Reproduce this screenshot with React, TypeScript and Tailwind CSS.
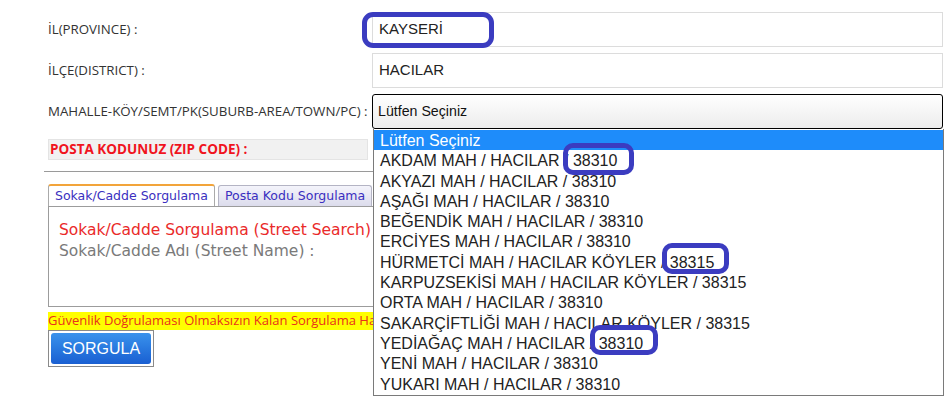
import React from "react";

const items = [
  "AKDAM MAH / HACILAR / 38310",
  "AKYAZI MAH / HACILAR / 38310",
  "AŞAĞI MAH / HACILAR / 38310",
  "BEĞENDİK MAH / HACILAR / 38310",
  "ERCİYES MAH / HACILAR / 38310",
  "HÜRMETCİ MAH / HACILAR KÖYLER / 38315",
  "KARPUZSEKİSİ MAH / HACILAR KÖYLER / 38315",
  "ORTA MAH / HACILAR / 38310",
  "SAKARÇİFTLİĞİ MAH / HACILAR KÖYLER / 38315",
  "YEDİAĞAÇ MAH / HACILAR / 38310",
  "YENİ MAH / HACILAR / 38310",
  "YUKARI MAH / HACILAR / 38310",
];

const labelFont = { fontFamily: '"Open Sans", "Noto Sans", sans-serif' };

export default function App() {
  return (
    <div className="relative w-[945px] h-[399px] bg-white overflow-hidden">
      <div className="flex flex-col pl-[48px] pt-[12px]">
        {/* Row 1 */}
        <div className="flex items-center h-[35px]">
          <div className="w-[324px] pt-[1px] text-[13.3px] text-[#333] whitespace-nowrap" style={labelFont}>İL(PROVINCE) :</div>
          <div className="w-[571px] h-[35px] border border-[#dcdcdc] flex items-center pl-[6px] text-[15px] text-[#222] font-['Liberation_Sans',Arial,sans-serif]">
            KAYSERİ
          </div>
        </div>
        {/* Row 2 */}
        <div className="flex items-center h-[35px] mt-[6px]">
          <div className="w-[324px] pt-[1px] text-[13.3px] text-[#333] whitespace-nowrap" style={labelFont}>İLÇE(DISTRICT) :</div>
          <div className="w-[571px] h-[35px] border border-[#dcdcdc] flex items-center pl-[6px] text-[15px] text-[#222] font-['Liberation_Sans',Arial,sans-serif]">
            HACILAR
          </div>
        </div>
        {/* Row 3 */}
        <div className="flex items-center h-[35px] mt-[6px]">
          <div className="w-[324px] pt-[1px] text-[13.3px] text-[#333] whitespace-nowrap" style={labelFont}>MAHALLE-KÖY/SEMT/PK(SUBURB-AREA/TOWN/PC) :</div>
          <div className="w-[571px] h-[35px] border-[1.5px] border-black rounded-[3px] bg-gradient-to-b from-white to-[#ececec] flex items-center pl-[5px] text-[14.2px] text-[#111] font-['Liberation_Sans',Arial,sans-serif]">
            Lütfen Seçiniz
          </div>
        </div>
        {/* Row 4 */}
        <div className="flex mt-[10px]">
          <div className="w-[320px] h-[21px] bg-[#f1f1f1] border border-[#e4e4e4] flex items-center pl-[1px] text-[13.5px] font-bold text-[#f0141e] whitespace-nowrap" style={labelFont}>
            POSTA KODUNUZ (ZIP CODE) :
          </div>
        </div>
        {/* hr */}
        <div className="-ml-[4px] mt-[11px] w-[400px] h-[1px] bg-[#9a9a9a]" />
        {/* Tabs */}
        <div className="flex mt-[12px] gap-[3px] items-end">
          <div className="h-[22px] px-[6px] flex items-center border border-[#aaa] border-t-[2px] border-t-[#f2a43a] border-b-0 rounded-t-[3px] bg-white text-[12.5px] text-[#3a2fc0] font-['DejaVu_Sans',Verdana,sans-serif] whitespace-nowrap">
            Sokak/Cadde Sorgulama
          </div>
          <div className="h-[21px] px-[6px] flex items-center border border-[#b4b4c4] border-b-0 rounded-t-[3px] bg-gradient-to-b from-[#f4f4fb] to-[#dcdcec] text-[12.5px] text-[#3a2fc0] font-['DejaVu_Sans',Verdana,sans-serif] whitespace-nowrap">
            Posta Kodu Sorgulama
          </div>
        </div>
        {/* Panel */}
        <div className="w-[600px] h-[101px] border border-[#9c9c9c] pt-[13px] pl-[10px] font-['DejaVu_Sans',Verdana,sans-serif] text-[15.5px] leading-[21px]">
          <div className="text-[#ea2a2a] whitespace-nowrap">Sokak/Cadde Sorgulama (Street Search)</div>
          <div className="text-[#7a7a7a] whitespace-nowrap">Sokak/Cadde Adı (Street Name) :</div>
        </div>
        {/* Yellow */}
        <div className="mt-[5px] w-[600px] h-[18px] bg-[#ffff00] flex items-center text-[13px] text-[#e8301c] whitespace-nowrap" style={labelFont}>
          Güvenlik Doğrulaması Olmaksızın Kalan Sorgulama Hakkınız
        </div>
        {/* Button */}
        <div className="w-[106px] h-[37px] border border-[#8a8a8a] p-[2px]">
          <div className="w-full h-full rounded-[3px] bg-gradient-to-b from-[#3a92ec] to-[#1a5fd2] flex items-center justify-center text-white text-[16px] font-['Liberation_Sans',Arial,sans-serif]">
            SORGULA
          </div>
        </div>
      </div>

      {/* Dropdown list */}
      <div className="absolute left-[373px] top-[129px] w-[571px] h-[267px] bg-white border border-[#7a7a7a] border-t-0 pt-[1px] font-['Liberation_Sans',Arial,sans-serif] text-[16px] leading-[20.3px] text-[#222]">
        <div className="bg-[#1e8cfa] text-white pl-[6px] pt-[1px] h-[20.3px]">Lütfen Seçiniz</div>
        {items.map((t) => (
          <div key={t} className="pl-[6px] pt-[1px] h-[20.3px] whitespace-nowrap">{t}</div>
        ))}
      </div>

      {/* Annotation highlights */}
      <div className="absolute left-[362px] top-[12px] w-[132px] h-[36px] border-[5px] border-[#3b3cc0] rounded-[11px]" />
      <div className="absolute left-[563px] top-[143px] w-[71px] h-[32px] border-[5px] border-[#3b3cc0] rounded-[10px]" />
      <div className="absolute left-[662px] top-[243px] w-[67px] h-[31px] border-[5px] border-[#3b3cc0] rounded-[10px]" />
      <div className="absolute left-[590px] top-[325px] w-[68px] h-[30px] border-[5px] border-[#3b3cc0] rounded-[10px]" />
    </div>
  );
}
